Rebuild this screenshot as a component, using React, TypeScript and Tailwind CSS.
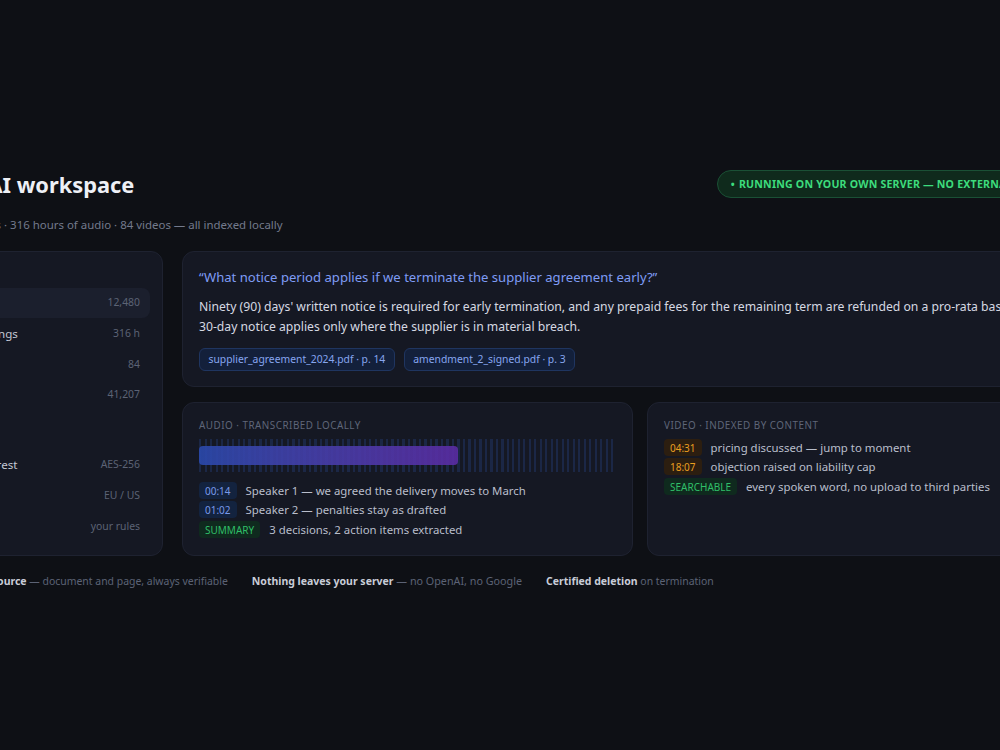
import React from "react";

const sources = [
  { label: "Documents", value: "12,480", active: true },
  { label: "Audio recordings", value: "316 h" },
  { label: "Videos", value: "84" },
  { label: "Embeddings", value: "41,207" },
];

const security = [
  { label: "Encrypted at rest", value: "AES-256" },
  { label: "Data region", value: "EU / US" },
  { label: "Retention", value: "your rules" },
];

const Tag = ({ tone, children }: { tone: "blue" | "amber" | "green"; children: React.ReactNode }) => {
  const tones = {
    blue: "bg-[#13233f] text-[#7a9aea]",
    amber: "bg-[#2c1e10] text-[#e99f20]",
    green: "bg-[#0f2a1e] text-[#2fbf68]",
  };
  return <span className={`rounded px-[6px] pb-0 pt-[2px] text-[10px] leading-[15px] ${tones[tone]}`}>{children}</span>;
};

const Line = ({ tag, tone, text }: { tag: string; tone: "blue" | "amber" | "green"; text: string }) => (
  <div className="flex items-center gap-[9px] text-[11.4px] leading-[17px] text-[#b9becb] whitespace-nowrap">
    <Tag tone={tone}>{tag}</Tag>
    <span>{text}</span>
  </div>
);

const Row = ({ label, value, active }: { label: string; value: string; active?: boolean }) => (
  <div className={`flex h-[30.8px] items-center justify-between rounded-lg px-[10px] ${active ? "bg-[#1b1f2d]" : ""}`}>
    <span className="text-[11.6px] text-[#c3c8d4]">{label}</span>
    <span className="text-[10.4px] text-[#5c6375]">{value}</span>
  </div>
);

export default function App() {
  return (
    <div className="flex min-h-screen items-center justify-center overflow-hidden bg-[#0e1015] pt-[7px] font-['Noto_Sans',sans-serif]">
      <div className="w-[1196px] shrink-0">
        <div className="flex h-[30px] items-center justify-between">
          <h1 className="ml-[2px] pt-[3px] text-[21.8px] font-bold leading-[30px] text-[#eef0f6]">Private AI workspace</h1>
          <div className="rounded-full border border-[#1a5035] bg-[#0f2a1c] py-[5px] pl-[13px] pr-[27px] text-[10.6px] font-bold leading-4 tracking-[0.2px] text-[#3ddc7c]">
            <span className="mr-[1px]">•</span> RUNNING ON YOUR OWN SERVER — NO EXTERNAL API CALLS
          </div>
        </div>
        <p className="mt-[17px] text-[11.45px] leading-[18px] text-[#737a8c]">12,480 documents · 316 hours of audio · 84 videos — all indexed locally</p>

        <div className="mt-[17px] flex gap-[19px]">
          <aside className="w-[261px] shrink-0 rounded-xl border border-[#1e2230] bg-[#151823] px-[12px] pb-[12px] pt-[14px]">
            <div className="mb-[6px] h-[16px] px-[10px] text-[10px] tracking-wide text-[#5c6375]">SOURCES</div>
            <div>
              {sources.map((s) => (
                <Row key={s.label} {...s} />
              ))}
            </div>
            <div className="mb-[6px] mt-[17px] h-[16px] px-[10px] text-[10px] tracking-wide text-[#5c6375]">SECURITY</div>
            <div>
              {security.map((s) => (
                <Row key={s.label} {...s} />
              ))}
            </div>
          </aside>

          <main className="min-w-0 flex-1">
            <section className="rounded-xl border border-[#1e2230] bg-[#151823] px-[16px] py-[15px]">
              <p className="text-[13.1px] leading-5 text-[#7f9cf5]">“What notice period applies if we terminate the supplier agreement early?”</p>
              <p className="mt-[10px] text-[12.2px] leading-[20.5px] text-[#d6d9e2]">
                Ninety (90) days' written notice is required for early termination, and any prepaid fees for the remaining term are refunded on a pro-rata basis. The
                <br />
                30-day notice applies only where the supplier is in material breach.
              </p>
              <div className="mt-[10px] flex gap-[9px]">
                <span className="rounded-md border border-[#1f3560] bg-[#13203b] px-[8.5px] py-[2px] text-[10.35px] leading-[17px] text-[#86a5ef]">supplier_agreement_2024.pdf · p. 14</span>
                <span className="rounded-md border border-[#1f3560] bg-[#13203b] px-[8.5px] py-[2px] text-[10.35px] leading-[17px] text-[#86a5ef]">amendment_2_signed.pdf · p. 3</span>
              </div>
            </section>

            <div className="mt-[15px] flex gap-[14px]">
              <section className="h-[154px] flex-1 rounded-xl border border-[#1e2230] bg-[#151823] px-[16px] pt-[15px]">
                <div className="text-[9.85px] leading-[15px] tracking-[0.5px] text-[#5f6679]">AUDIO · TRANSCRIBED LOCALLY</div>
                <div className="mr-[2px] mt-[6px] flex h-[33px] items-center bg-[repeating-linear-gradient(90deg,#1b2746_0_2px,transparent_2px_5.5px)]">
                  <div className="h-[19px] w-[259px] rounded-sm bg-gradient-to-r from-[#2a49ac] to-[#5a2ca4] opacity-90" />
                </div>
                <div className="mt-[10px] flex flex-col gap-[2.5px]">
                  <Line tag="00:14" tone="blue" text="Speaker 1 — we agreed the delivery moves to March" />
                  <Line tag="01:02" tone="blue" text="Speaker 2 — penalties stay as drafted" />
                  <Line tag="SUMMARY" tone="green" text="3 decisions, 2 action items extracted" />
                </div>
              </section>
              <section className="h-[154px] flex-1 rounded-xl border border-[#1e2230] bg-[#151823] px-[16px] pt-[15px]">
                <div className="text-[9.85px] leading-[15px] tracking-[0.5px] text-[#5f6679]">VIDEO · INDEXED BY CONTENT</div>
                <div className="mt-[6px] flex flex-col gap-[2.5px]">
                  <Line tag="04:31" tone="amber" text="pricing discussed — jump to moment" />
                  <Line tag="18:07" tone="amber" text="objection raised on liability cap" />
                  <Line tag="SEARCHABLE" tone="green" text="every spoken word, no upload to third parties" />
                </div>
              </section>
            </div>
          </main>
        </div>

        <div className="mt-[17px] flex gap-[24px] text-[10.45px] leading-4 text-[#5c6375]">
          <span><b className="text-[10.5px] font-bold text-[#c9cdd8]">Answers cite the source</b> — document and page, always verifiable</span>
          <span className="text-[10.75px]"><b className="text-[10.5px] font-bold text-[#c9cdd8]">Nothing leaves your server</b> — no OpenAI, no Google</span>
          <span><b className="text-[10.5px] font-bold text-[#c9cdd8]">Certified deletion</b> on termination</span>
        </div>
      </div>
    </div>
  );
}
